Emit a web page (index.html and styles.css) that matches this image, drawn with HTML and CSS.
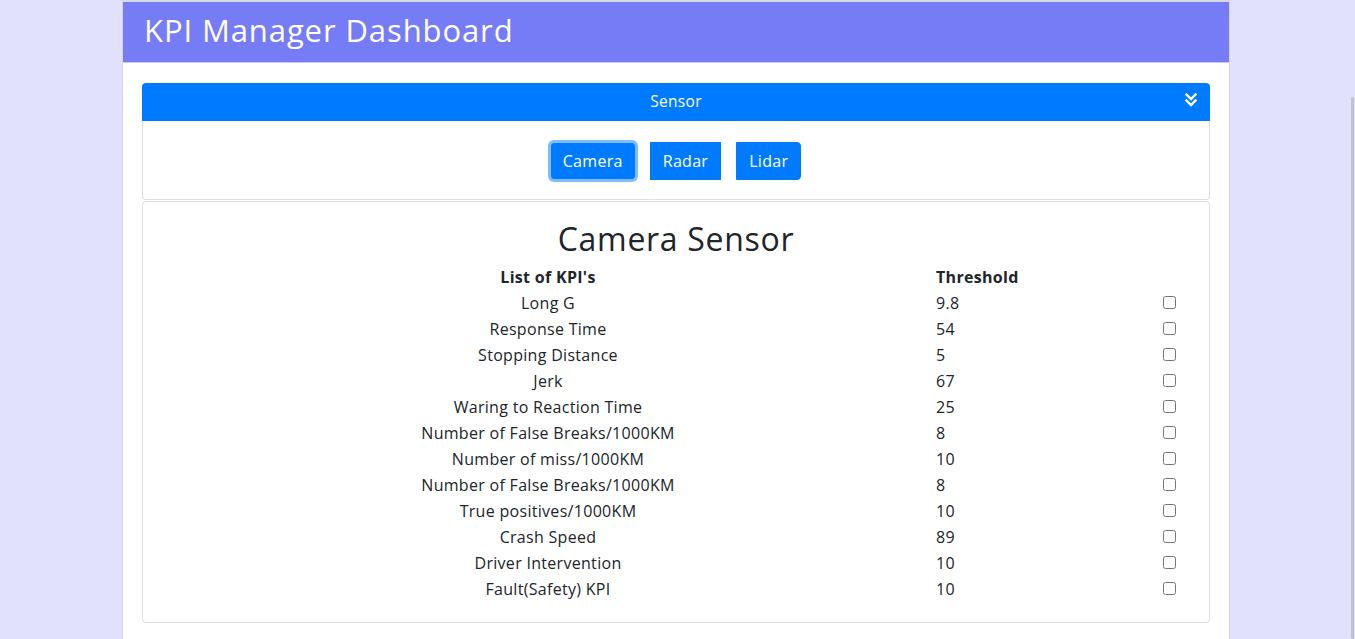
FILE: index.html
```html
<!DOCTYPE html>
<html lang="en">
<head>
<meta charset="utf-8">
<title>KPI Manager Dashboard</title>
<link rel="stylesheet" href="styles.css">
</head>
<body>
<div class="page">
  <header class="topbar">
    <h1 class="brand">KPI Manager Dashboard</h1>
  </header>
  <main class="content">
    <section class="accordion">
      <div class="acc-head">
        <span class="acc-title">Sensor</span>
        <svg class="acc-icon" width="12" height="14" viewBox="0 0 12 14" aria-hidden="true">
          <path d="M1.5 1.5 L6 6 L10.5 1.5" fill="none" stroke="#fff" stroke-width="2.4" stroke-linecap="square"/>
          <path d="M1.5 7.5 L6 12 L10.5 7.5" fill="none" stroke="#fff" stroke-width="2.4" stroke-linecap="square"/>
        </svg>
      </div>
      <div class="acc-body">
        <button class="btn btn-first active">Camera</button>
        <button class="btn">Radar</button>
        <button class="btn btn-last">Lidar</button>
      </div>
    </section>
    <section class="card">
      <h2 class="card-title">Camera Sensor</h2>
      <div class="kpi-grid">
        <div class="cell head name">List of KPI's</div>
        <div class="cell head value">Threshold</div>
        <div class="cell head check"></div>

        <div class="cell name">Long G</div><div class="cell value">9.8</div><div class="cell check"><input type="checkbox"></div>
        <div class="cell name">Response Time</div><div class="cell value">54</div><div class="cell check"><input type="checkbox"></div>
        <div class="cell name">Stopping Distance</div><div class="cell value">5</div><div class="cell check"><input type="checkbox"></div>
        <div class="cell name">Jerk</div><div class="cell value">67</div><div class="cell check"><input type="checkbox"></div>
        <div class="cell name">Waring to Reaction Time</div><div class="cell value">25</div><div class="cell check"><input type="checkbox"></div>
        <div class="cell name">Number of False Breaks/1000KM</div><div class="cell value">8</div><div class="cell check"><input type="checkbox"></div>
        <div class="cell name">Number of miss/1000KM</div><div class="cell value">10</div><div class="cell check"><input type="checkbox"></div>
        <div class="cell name">Number of False Breaks/1000KM</div><div class="cell value">8</div><div class="cell check"><input type="checkbox"></div>
        <div class="cell name">True positives/1000KM</div><div class="cell value">10</div><div class="cell check"><input type="checkbox"></div>
        <div class="cell name">Crash Speed</div><div class="cell value">89</div><div class="cell check"><input type="checkbox"></div>
        <div class="cell name">Driver Intervention</div><div class="cell value">10</div><div class="cell check"><input type="checkbox"></div>
        <div class="cell name">Fault(Safety) KPI</div><div class="cell value">10</div><div class="cell check"><input type="checkbox"></div>
      </div>
    </section>
  </main>
</div>
<div class="scroll-thumb"></div>
</body>
</html>
```

FILE: styles.css
```css
* { box-sizing: border-box; }

html, body {
  margin: 0;
  height: 100%;
  overflow: hidden;
}

body {
  background: #e1e1fd;
  font-family: "Open Sans", "Liberation Sans", sans-serif;
  color: #212529;
  font-size: 16px;
  letter-spacing: 0.3px;
}

.page {
  width: 1108px;
  margin-left: 122px;
  min-height: 639px;
  background: #fff;
  border-top: 2px solid #d9d9e3;
  border-left: 1px solid #d4d4e4;
  border-right: 1px solid #d4d4e4;
}

.topbar {
  height: 60px;
  background: #767bf6;
  box-shadow: 0 1px 0 #c9c9e6;
  display: flex;
  align-items: center;
  padding-left: 21px;
  padding-bottom: 4px;
}

.brand {
  margin: 0;
  color: #fff;
  font-weight: 400;
  font-size: 31px;
  line-height: 1;
  letter-spacing: 0.9px;
}

.content {
  padding: 21px 19px 0 19px;
}

.acc-head {
  height: 38px;
  background: #007bff;
  border-radius: 4px 4px 0 0;
  color: #fff;
  display: flex;
  align-items: center;
  justify-content: center;
  position: relative;
  padding-bottom: 2px;
}

.acc-title {
  font-size: 15.5px;
}

.acc-icon {
  position: absolute;
  right: 13px;
  top: 10px;
}

.acc-body {
  height: 79px;
  border: 1px solid #dfdfdf;
  border-top: none;
  border-radius: 0 0 4px 4px;
  display: flex;
  justify-content: center;
  align-items: center;
  gap: 15px;
  padding-top: 2px;
}

.btn {
  font-family: inherit;
  font-size: 16px;
  letter-spacing: 0.3px;
  color: #fff;
  background: #007bff;
  border: 1px solid #007bff;
  height: 38px;
  padding: 0 12px;
  border-radius: 0;
  cursor: pointer;
}

.btn-first { border-radius: 4px 0 0 4px; }
.btn-last { border-radius: 0 4px 4px 0; }

.btn.active {
  box-shadow: 0 0 0 3px rgba(0, 123, 255, 0.5);
  border-radius: 3px;
  height: 36px;
  padding: 0 11px;
}

.card {
  margin-top: 1px;
  border: 1px solid #dfdfdf;
  border-radius: 4px;
  padding: 18px 20px 20px 20px;
}

.card-title {
  margin: 0 0 6px 0;
  text-align: center;
  font-weight: 400;
  font-size: 32px;
  line-height: 38px;
  letter-spacing: 0.7px;
}

.kpi-grid {
  display: grid;
  grid-template-columns: 770px 217px 39px;
  grid-auto-rows: 26px;
}

.cell {
  display: flex;
  align-items: center;
  font-size: 16px;
}

.cell.name { justify-content: center; }
.cell.value { padding-left: 3px; }
.cell.check { justify-content: center; }

.cell.head { font-weight: 700; }

.cell input {
  margin: 0 0 2px 0;
  width: 13px;
  height: 13px;
}

.scroll-thumb {
  position: fixed;
  right: 1px;
  top: 97px;
  bottom: 0;
  width: 3px;
  background: #c2c2c8;
  border-radius: 2px;
}
```
